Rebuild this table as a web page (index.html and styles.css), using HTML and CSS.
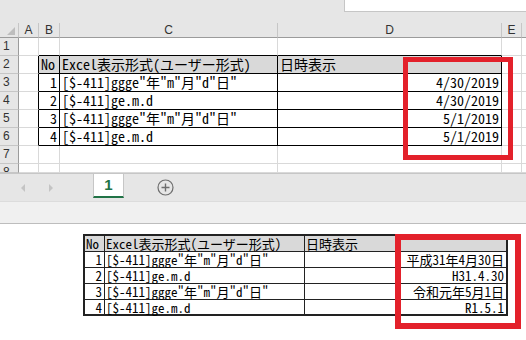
FILE: index.html
```
<!DOCTYPE html>
<html lang="ja">
<head>
<meta charset="utf-8">
<title>和暦表示</title>
<link rel="stylesheet" href="styles.css">
</head>
<body>
<div class="titlebar">
  <div class="namebox"></div>
</div>

<div class="sheet">
  <div class="corner"><span class="tri"></span></div>
  <div class="colhead">A</div>
  <div class="colhead">B</div>
  <div class="colhead">C</div>
  <div class="colhead">D</div>
  <div class="colhead">E</div>
  <div class="colhead last"></div>

  <div class="rowhead">1</div>
  <div class="cell"></div>
  <div class="cell b-bot"></div>
  <div class="cell b-bot"></div>
  <div class="cell b-bot"></div>
  <div class="cell"></div>
  <div class="cell last"></div>

  <div class="rowhead">2</div>
  <div class="cell b-right"></div>
  <div class="cell tbl fill">No</div>
  <div class="cell tbl fill">Excel表示形式(ユーザー形式)</div>
  <div class="cell tbl fill">日時表示</div>
  <div class="cell"></div>
  <div class="cell last"></div>

  <div class="rowhead">3</div>
  <div class="cell b-right"></div>
  <div class="cell tbl num">1</div>
  <div class="cell tbl">[$-411]ggge"年"m"月"d"日"</div>
  <div class="cell tbl num">4/30/2019</div>
  <div class="cell"></div>
  <div class="cell last"></div>

  <div class="rowhead">4</div>
  <div class="cell b-right"></div>
  <div class="cell tbl num">2</div>
  <div class="cell tbl">[$-411]ge.m.d</div>
  <div class="cell tbl num">4/30/2019</div>
  <div class="cell"></div>
  <div class="cell last"></div>

  <div class="rowhead">5</div>
  <div class="cell b-right"></div>
  <div class="cell tbl num">3</div>
  <div class="cell tbl">[$-411]ggge"年"m"月"d"日"</div>
  <div class="cell tbl num">5/1/2019</div>
  <div class="cell"></div>
  <div class="cell last"></div>

  <div class="rowhead">6</div>
  <div class="cell b-right"></div>
  <div class="cell tbl num">4</div>
  <div class="cell tbl">[$-411]ge.m.d</div>
  <div class="cell tbl num">5/1/2019</div>
  <div class="cell"></div>
  <div class="cell last"></div>

  <div class="rowhead">7</div>
  <div class="cell"></div>
  <div class="cell"></div>
  <div class="cell"></div>
  <div class="cell"></div>
  <div class="cell"></div>
  <div class="cell last"></div>

  <div class="rowhead cut">8</div>
  <div class="cell"></div>
  <div class="cell"></div>
  <div class="cell"></div>
  <div class="cell"></div>
  <div class="cell"></div>
  <div class="cell last"></div>

  <!-- highlight round the result column -->
  <div class="mark mark-top"></div>
</div>

<div class="tabbar">
  <div class="tabnav">
    <span class="arrow left"></span>
    <span class="arrow right"></span>
  </div>
  <div class="tab">1</div>
  <div class="addsheet">
    <svg width="17" height="17" viewBox="0 0 17 17">
      <circle cx="8.5" cy="8.5" r="7.5" fill="none" stroke="#6e6e6e" stroke-width="1.2"/>
      <path d="M8.5 4.5v8M4.5 8.5h8" stroke="#6e6e6e" stroke-width="1.4"/>
    </svg>
  </div>
</div>
<div class="statusbar"></div>

<div class="preview">
  <div class="ptable">
    <div class="pc fill">No</div>
    <div class="pc fill">Excel表示形式(ユーザー形式)</div>
    <div class="pc fill">日時表示</div>

    <div class="pc num">1</div>
    <div class="pc">[$-411]ggge"年"m"月"d"日"</div>
    <div class="pc num">平成31年4月30日</div>

    <div class="pc num">2</div>
    <div class="pc">[$-411]ge.m.d</div>
    <div class="pc num">H31.4.30</div>

    <div class="pc num">3</div>
    <div class="pc">[$-411]ggge"年"m"月"d"日"</div>
    <div class="pc num">令和元年5月1日</div>

    <div class="pc num">4</div>
    <div class="pc">[$-411]ge.m.d</div>
    <div class="pc num">R1.5.1</div>
  </div>
  <div class="mark mark-bottom"></div>
</div>
</body>
</html>
```

FILE: styles.css
```
* {
  margin: 0;
  padding: 0;
  box-sizing: border-box;
}

body {
  width: 526px;
  height: 340px;
  overflow: hidden;
  background-color: #fff;
  font-family: "Noto Sans CJK JP", sans-serif;
}

/* top strip with the formula box */
.titlebar {
  height: 23px;
  background-color: #e6e6e6;
  display: flex;
  justify-content: flex-end;
}

.namebox {
  width: 182px;
  height: 12px;
  background-color: #fff;
  border-left: 1px solid #c6c6c6;
  border-bottom: 1px solid #c6c6c6;
}

/* worksheet grid */
.sheet {
  position: relative;
  display: grid;
  grid-template-columns: 19px 20px 21px 218px 224px 20px 1fr;
  grid-template-rows: 15px repeat(7, 18px) 9px;
  overflow: hidden;
}

.corner {
  background-color: #e6e6e6;
  border-right: 1px solid #c6c6c6;
  border-bottom: 1px solid #9b9b9b;
  display: flex;
  justify-content: flex-end;
  align-items: flex-end;
  padding: 0 3px 2px 0;
}

.tri {
  width: 0;
  height: 0;
  border-left: 8px solid transparent;
  border-bottom: 8px solid #bdbdbd;
}

.colhead {
  background-color: #e6e6e6;
  border-right: 1px solid #c6c6c6;
  border-bottom: 1px solid #9b9b9b;
  font-family: "Liberation Sans", sans-serif;
  font-size: 12px;
  line-height: 14px;
  color: #333;
  text-align: center;
}

.colhead.last {
  border-right: none;
}

.rowhead {
  background-color: #e6e6e6;
  border-right: 1px solid #9b9b9b;
  border-bottom: 1px solid #c6c6c6;
  font-family: "Liberation Sans", sans-serif;
  font-size: 12px;
  line-height: 17px;
  color: #333;
  padding-left: 3px;
}

.rowhead.cut {
  overflow: hidden;
}

.cell {
  border-right: 1px solid #d9d9d9;
  border-bottom: 1px solid #d9d9d9;
  font-size: 14px;
  line-height: 17px;
  font-feature-settings: "hwid";
  padding: 0 2px;
  white-space: nowrap;
  color: #000;
}

.cell.last {
  border-right: none;
}

.cell.tbl {
  border-right-color: #000;
  border-bottom-color: #000;
}

.b-right {
  border-right-color: #000;
}

.b-bot {
  border-bottom-color: #000;
}

.fill {
  background-color: #d9d9d9;
}

.num {
  text-align: right;
}

/* red annotation frames */
.mark {
  position: absolute;
  border: 5px solid #e3212b;
}

.mark-top {
  left: 403px;
  top: 34px;
  width: 110px;
  height: 103px;
}

.mark-bottom {
  left: 395px;
  top: 10px;
  width: 126px;
  height: 95px;
  border-width: 6px;
}

/* sheet tabs */
.tabbar {
  height: 28px;
  background-color: #e6e6e6;
  border-top: 1px solid #c6c6c6;
  display: flex;
  align-items: flex-start;
}

.tabnav {
  width: 93px;
  height: 27px;
  display: flex;
  align-items: center;
  padding-left: 21px;
  gap: 24px;
}

.arrow {
  width: 0;
  height: 0;
  border-top: 4px solid transparent;
  border-bottom: 4px solid transparent;
}

.arrow.left {
  border-right: 4px solid #c4c4c4;
}

.arrow.right {
  border-left: 4px solid #c4c4c4;
}

.tab {
  width: 31px;
  height: 24px;
  background-color: #fff;
  border-left: 1px solid #c6c6c6;
  border-right: 1px solid #c6c6c6;
  border-bottom: 2px solid #217346;
  font-family: "Liberation Sans", sans-serif;
  font-size: 15px;
  font-weight: bold;
  color: #217346;
  text-align: center;
  line-height: 22px;
}

.addsheet {
  margin-left: 33px;
  height: 27px;
  display: flex;
  align-items: center;
}

.statusbar {
  height: 23px;
  background-color: #f0f0f0;
  border-top: 1px solid #dcdcdc;
  border-bottom: 1px solid #bdbdbd;
}

/* printed copy of the table */
.preview {
  position: relative;
  height: 116px;
  padding: 10px 0 0 83px;
}

.ptable {
  display: grid;
  grid-template-columns: 20px 200px 203px;
  grid-auto-rows: 16px;
  width: 427px;
  border-top: 2px solid #222;
  border-left: 2px solid #222;
}

.pc {
  border-right: 1px solid #222;
  border-bottom: 1px solid #222;
  font-size: 13px;
  line-height: 15px;
  font-feature-settings: "hwid";
  padding: 0 2px 0 1px;
  white-space: nowrap;
  color: #000;
}

.pc:nth-child(3n) {
  border-right-width: 2px;
}

.pc:nth-last-child(-n+3) {
  border-bottom-width: 2px;
}
```
